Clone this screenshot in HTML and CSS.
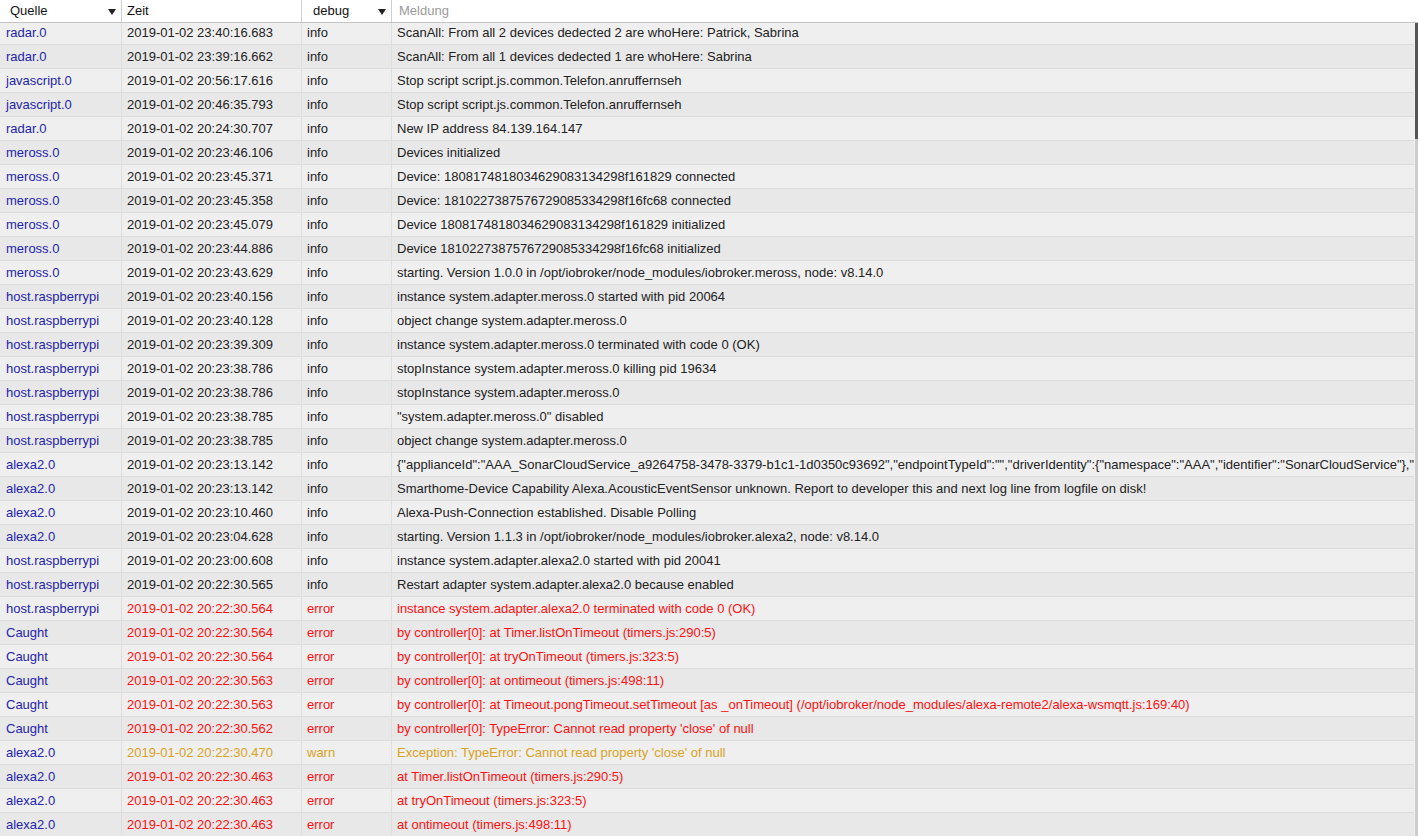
FILE: index.html
```html
<!DOCTYPE html>
<html>
<head>
<meta charset="utf-8">
<link rel="stylesheet" href="styles.css">
</head>
<body>
<div class="log">
  <div class="head">
    <div class="hcell sel">Quelle<svg class="arrow" width="8" height="6" viewBox="0 0 8 6"><path d="M0 0H8L4 6Z" fill="#222"/></svg></div>
    <div class="hcell zeit">Zeit</div>
    <div class="hcell sel dbg">debug<svg class="arrow" width="8" height="6" viewBox="0 0 8 6"><path d="M0 0H8L4 6Z" fill="#222"/></svg></div>
    <div class="hcell msg ph">Meldung</div>
  </div>
  <div class="bodywrap">
    <div class="rows">
      <div class="row"><div class="c src">radar.0</div><div class="c">2019-01-02 23:40:16.683</div><div class="c">info</div><div class="c m">ScanAll: From all 2 devices dedected 2 are whoHere: Patrick, Sabrina</div></div>
      <div class="row"><div class="c src">radar.0</div><div class="c">2019-01-02 23:39:16.662</div><div class="c">info</div><div class="c m">ScanAll: From all 1 devices dedected 1 are whoHere: Sabrina</div></div>
      <div class="row"><div class="c src">javascript.0</div><div class="c">2019-01-02 20:56:17.616</div><div class="c">info</div><div class="c m">Stop script script.js.common.Telefon.anruffernseh</div></div>
      <div class="row"><div class="c src">javascript.0</div><div class="c">2019-01-02 20:46:35.793</div><div class="c">info</div><div class="c m">Stop script script.js.common.Telefon.anruffernseh</div></div>
      <div class="row"><div class="c src">radar.0</div><div class="c">2019-01-02 20:24:30.707</div><div class="c">info</div><div class="c m">New IP address 84.139.164.147</div></div>
      <div class="row"><div class="c src">meross.0</div><div class="c">2019-01-02 20:23:46.106</div><div class="c">info</div><div class="c m">Devices initialized</div></div>
      <div class="row"><div class="c src">meross.0</div><div class="c">2019-01-02 20:23:45.371</div><div class="c">info</div><div class="c m">Device: 1808174818034629083134298f161829 connected</div></div>
      <div class="row"><div class="c src">meross.0</div><div class="c">2019-01-02 20:23:45.358</div><div class="c">info</div><div class="c m">Device: 1810227387576729085334298f16fc68 connected</div></div>
      <div class="row"><div class="c src">meross.0</div><div class="c">2019-01-02 20:23:45.079</div><div class="c">info</div><div class="c m">Device 1808174818034629083134298f161829 initialized</div></div>
      <div class="row"><div class="c src">meross.0</div><div class="c">2019-01-02 20:23:44.886</div><div class="c">info</div><div class="c m">Device 1810227387576729085334298f16fc68 initialized</div></div>
      <div class="row"><div class="c src">meross.0</div><div class="c">2019-01-02 20:23:43.629</div><div class="c">info</div><div class="c m">starting. Version 1.0.0 in /opt/iobroker/node_modules/iobroker.meross, node: v8.14.0</div></div>
      <div class="row"><div class="c src">host.raspberrypi</div><div class="c">2019-01-02 20:23:40.156</div><div class="c">info</div><div class="c m">instance system.adapter.meross.0 started with pid 20064</div></div>
      <div class="row"><div class="c src">host.raspberrypi</div><div class="c">2019-01-02 20:23:40.128</div><div class="c">info</div><div class="c m">object change system.adapter.meross.0</div></div>
      <div class="row"><div class="c src">host.raspberrypi</div><div class="c">2019-01-02 20:23:39.309</div><div class="c">info</div><div class="c m">instance system.adapter.meross.0 terminated with code 0 (OK)</div></div>
      <div class="row"><div class="c src">host.raspberrypi</div><div class="c">2019-01-02 20:23:38.786</div><div class="c">info</div><div class="c m">stopInstance system.adapter.meross.0 killing pid 19634</div></div>
      <div class="row"><div class="c src">host.raspberrypi</div><div class="c">2019-01-02 20:23:38.786</div><div class="c">info</div><div class="c m">stopInstance system.adapter.meross.0</div></div>
      <div class="row"><div class="c src">host.raspberrypi</div><div class="c">2019-01-02 20:23:38.785</div><div class="c">info</div><div class="c m">"system.adapter.meross.0" disabled</div></div>
      <div class="row"><div class="c src">host.raspberrypi</div><div class="c">2019-01-02 20:23:38.785</div><div class="c">info</div><div class="c m">object change system.adapter.meross.0</div></div>
      <div class="row"><div class="c src">alexa2.0</div><div class="c">2019-01-02 20:23:13.142</div><div class="c">info</div><div class="c m">{"applianceId":"AAA_SonarCloudService_a9264758-3478-3379-b1c1-1d0350c93692","endpointTypeId":"","driverIdentity":{"namespace":"AAA","identifier":"SonarCloudService"},"</div></div>
      <div class="row"><div class="c src">alexa2.0</div><div class="c">2019-01-02 20:23:13.142</div><div class="c">info</div><div class="c m">Smarthome-Device Capability Alexa.AcousticEventSensor unknown. Report to developer this and next log line from logfile on disk!</div></div>
      <div class="row"><div class="c src">alexa2.0</div><div class="c">2019-01-02 20:23:10.460</div><div class="c">info</div><div class="c m">Alexa-Push-Connection established. Disable Polling</div></div>
      <div class="row"><div class="c src">alexa2.0</div><div class="c">2019-01-02 20:23:04.628</div><div class="c">info</div><div class="c m">starting. Version 1.1.3 in /opt/iobroker/node_modules/iobroker.alexa2, node: v8.14.0</div></div>
      <div class="row"><div class="c src">host.raspberrypi</div><div class="c">2019-01-02 20:23:00.608</div><div class="c">info</div><div class="c m">instance system.adapter.alexa2.0 started with pid 20041</div></div>
      <div class="row"><div class="c src">host.raspberrypi</div><div class="c">2019-01-02 20:22:30.565</div><div class="c">info</div><div class="c m">Restart adapter system.adapter.alexa2.0 because enabled</div></div>
      <div class="row error"><div class="c src">host.raspberrypi</div><div class="c">2019-01-02 20:22:30.564</div><div class="c">error</div><div class="c m">instance system.adapter.alexa2.0 terminated with code 0 (OK)</div></div>
      <div class="row error"><div class="c src">Caught</div><div class="c">2019-01-02 20:22:30.564</div><div class="c">error</div><div class="c m">by controller[0]: at Timer.listOnTimeout (timers.js:290:5)</div></div>
      <div class="row error"><div class="c src">Caught</div><div class="c">2019-01-02 20:22:30.564</div><div class="c">error</div><div class="c m">by controller[0]: at tryOnTimeout (timers.js:323:5)</div></div>
      <div class="row error"><div class="c src">Caught</div><div class="c">2019-01-02 20:22:30.563</div><div class="c">error</div><div class="c m">by controller[0]: at ontimeout (timers.js:498:11)</div></div>
      <div class="row error"><div class="c src">Caught</div><div class="c">2019-01-02 20:22:30.563</div><div class="c">error</div><div class="c m">by controller[0]: at Timeout.pongTimeout.setTimeout [as _onTimeout] (/opt/iobroker/node_modules/alexa-remote2/alexa-wsmqtt.js:169:40)</div></div>
      <div class="row error"><div class="c src">Caught</div><div class="c">2019-01-02 20:22:30.562</div><div class="c">error</div><div class="c m">by controller[0]: TypeError: Cannot read property 'close' of null</div></div>
      <div class="row warn"><div class="c src">alexa2.0</div><div class="c">2019-01-02 20:22:30.470</div><div class="c">warn</div><div class="c m">Exception: TypeError: Cannot read property 'close' of null</div></div>
      <div class="row error"><div class="c src">alexa2.0</div><div class="c">2019-01-02 20:22:30.463</div><div class="c">error</div><div class="c m">at Timer.listOnTimeout (timers.js:290:5)</div></div>
      <div class="row error"><div class="c src">alexa2.0</div><div class="c">2019-01-02 20:22:30.463</div><div class="c">error</div><div class="c m">at tryOnTimeout (timers.js:323:5)</div></div>
      <div class="row error"><div class="c src">alexa2.0</div><div class="c">2019-01-02 20:22:30.463</div><div class="c">error</div><div class="c m">at ontimeout (timers.js:498:11)</div></div>
    </div>
    <div class="scrollbar"><div class="thumb"></div></div>
  </div>
</div>
</body>
</html>
```
FILE: styles.css
```css
html, body {
  margin: 0;
  padding: 0;
  background: #ffffff;
  overflow: hidden;
}
body {
  font-family: "Liberation Sans", Arial, sans-serif;
  font-size: 13px;
  color: #222222;
  width: 1418px;
  height: 836px;
}
.log {
  display: flex;
  flex-direction: column;
  height: 836px;
  overflow: hidden;
}
.head {
  position: relative;
  z-index: 1;
  display: grid;
  grid-template-columns: 122px 180px 90px 1fr;
  height: 22px;
  background: #ffffff;
  border-bottom: 1px solid #c4c4c4;
  flex: none;
}
.hcell {
  display: flex;
  align-items: center;
  border-right: 1px solid #cfcfcf;
  color: #111111;
  box-sizing: border-box;
  padding-left: 5px;
  line-height: 22px;
}
.hcell.sel {
  padding-left: 10px;
  padding-right: 5px;
  justify-content: space-between;
}
.hcell.dbg {
  padding-left: 11px;
}
.hcell.zeit {
  padding-left: 5px;
}
.hcell.msg {
  border-right: none;
  padding-left: 7px;
}
.hcell.ph {
  color: #9a9a9a;
}
.arrow {
  display: block;
  margin-top: 1px;
}
.bodywrap {
  display: flex;
  margin-top: -2px;
  flex: 1;
  min-height: 0;
}
.rows {
  flex: 1;
  min-width: 0;
  overflow: hidden;
}
.row {
  display: grid;
  grid-template-columns: 122px 180px 90px 1fr;
  height: 24px;
  box-sizing: border-box;
  border-bottom: 1px solid #dcdcdc;
  background: #efefef;
}
.row:nth-child(even) {
  background: #e8e8e8;
}
.c {
  box-sizing: border-box;
  border-right: 1px solid #dedede;
  padding-left: 5px;
  line-height: 23px;
  white-space: nowrap;
  overflow: hidden;
}
.c.src {
  padding-left: 6px;
  color: #2424a8;
}
.c.m {
  border-right: none;
  padding-right: 0;
}
.row.error .c {
  color: #ff1010;
}
.row.warn .c {
  color: #d9a21e;
}
.row.error .c.src,
.row.warn .c.src {
  color: #2424a8;
}
.scrollbar {
  width: 4px;
  flex: none;
  box-sizing: border-box;
  border-left: 1px solid #f2f2f2;
  background: #cdcdcd;
  margin-top: 2px;
}
.thumb {
  height: 116px;
  background: #555555;
}
```
